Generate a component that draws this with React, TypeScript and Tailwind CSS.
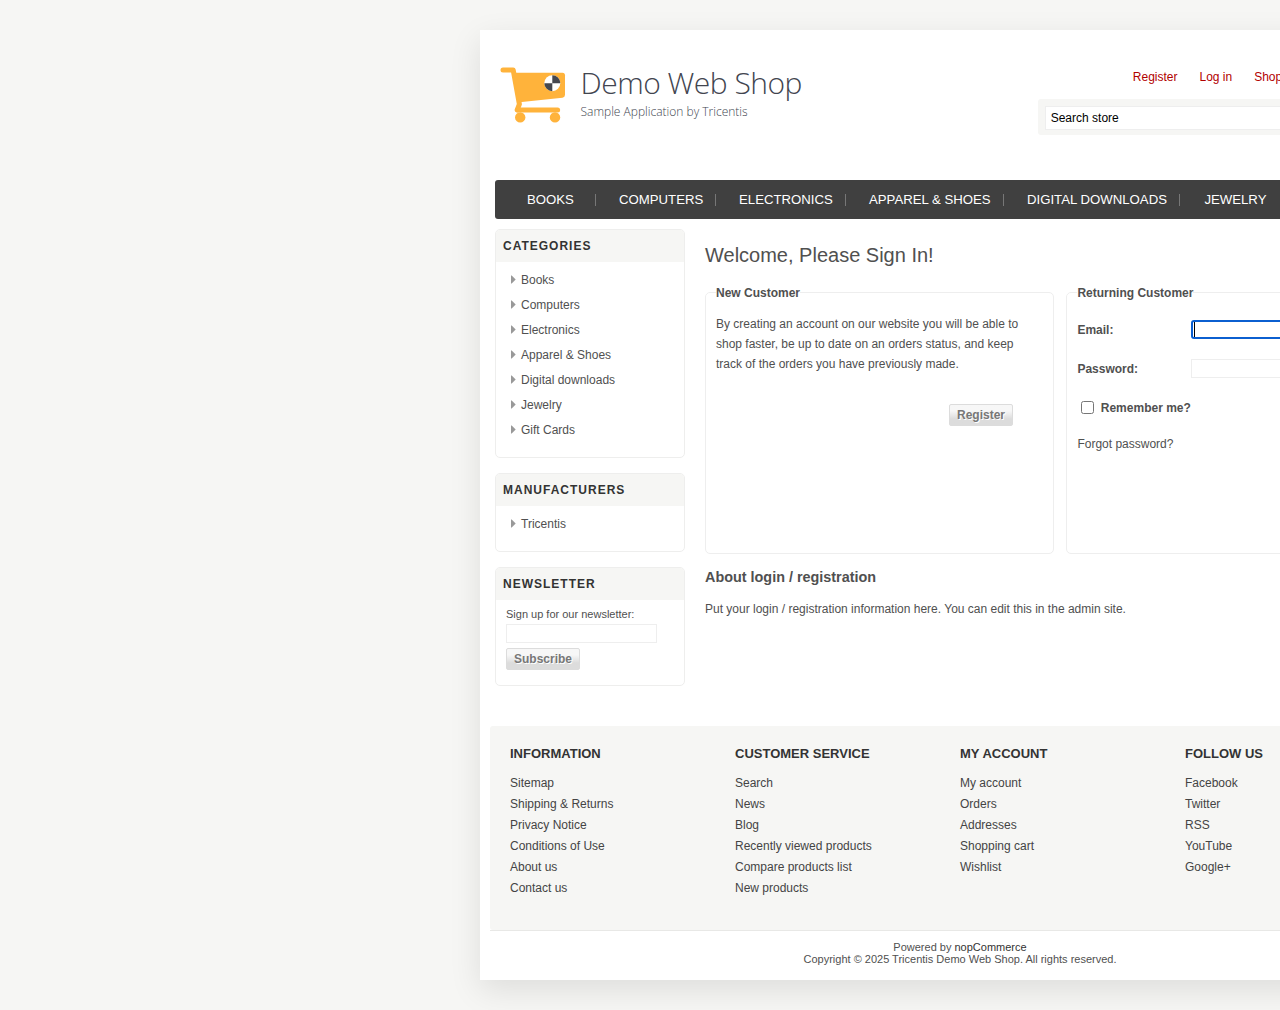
import type { ReactNode } from "react";

const navItems = [
  { label: "BOOKS", cls: "w-[101px] pl-8" },
  { label: "COMPUTERS", cls: "w-[120px] pl-[23px]" },
  { label: "ELECTRONICS", cls: "w-[130px] pl-[23px]" },
  { label: "APPAREL & SHOES", cls: "w-[158px] pl-[23px]" },
  { label: "DIGITAL DOWNLOADS", cls: "w-[176px] pl-[23px]" },
  { label: "JEWELRY", cls: "w-[110px] pl-[24.4px]" },
];

const footerColumns = [
  { title: "INFORMATION", links: ["Sitemap", "Shipping & Returns", "Privacy Notice", "Conditions of Use", "About us", "Contact us"] },
  { title: "CUSTOMER SERVICE", links: ["Search", "News", "Blog", "Recently viewed products", "Compare products list", "New products"] },
  { title: "MY ACCOUNT", links: ["My account", "Orders", "Addresses", "Shopping cart", "Wishlist"] },
  { title: "FOLLOW US", links: ["Facebook", "Twitter", "RSS", "YouTube", "Google+"] },
];

function CartLogo() {
  return (
    <svg width="66" height="58" viewBox="0 0 66 58" className="shrink-0" aria-hidden="true">
      <path
        d="M3 3H13.2L19.4 37.2L17.2 43"
        fill="none"
        stroke="#ffb33b"
        strokeWidth="5"
        strokeLinecap="round"
        strokeLinejoin="round"
      />
      <path d="M12.5 5.7H62.5Q65 5.7 65 8.2V27.8Q65 30.3 62.5 30.7L19.4 35.2Z" fill="#ffb33b" />
      <path d="M17.8 42.9H57.6" stroke="#ffb33b" strokeWidth="5" strokeLinecap="round" />
      <circle cx="20.2" cy="50.4" r="5.2" fill="#ffb33b" />
      <circle cx="55" cy="50.4" r="5.2" fill="#ffb33b" />
      <circle cx="52.3" cy="16.2" r="8" fill="#fff" />
      <path d="M52.3 16.2V8.2A8 8 0 0 1 60.3 16.2ZM52.3 16.2V24.2A8 8 0 0 1 44.3 16.2Z" fill="#45474f" />
    </svg>
  );
}

function Block({ title, className, children }: { title: string; className: string; children: ReactNode }) {
  return (
    <section className={"overflow-hidden rounded-[5px] border border-[#eeeeed] " + className}>
      <h3 className="h-8 bg-[#f6f6f4] pl-[7px] font-bold leading-[32px] tracking-[1px] text-[#333]">{title}</h3>
      {children}
    </section>
  );
}

function LinkList({ items }: { items: string[] }) {
  return (
    <ul className="pt-[5px] pl-[15px]">
      {items.map((item) => (
        <li key={item} className="flex h-[25px] items-center gap-[5px]">
          <svg width="5" height="9" viewBox="0 0 5 9" aria-hidden="true">
            <path d="M0 0.5H0.7L4.7 4.5L0.7 8.5H0Z" fill="#999" />
          </svg>
          <a>{item}</a>
        </li>
      ))}
    </ul>
  );
}

function GreyButton({ children, className }: { children: ReactNode; className: string }) {
  return (
    <button
      className={
        "block h-[22px] rounded-[2px] border border-[#dcdcdc] bg-linear-to-b from-[#f7f7f7] from-30% to-[#dcdcdc] to-70% text-center font-bold leading-5 text-[#777] [text-shadow:1px_1px_0_#fff] " +
        className
      }
    >
      {children}
    </button>
  );
}

export default function App() {
  return (
    <div className="h-[1010px] w-[1280px] overflow-hidden bg-[#f6f6f4] pt-[30px] pl-[480px] font-['Liberation_Sans',Arial,sans-serif] text-[12px] text-[#505050]">
      <div className="h-[950px] w-[960px] bg-white shadow-[0_10px_30px_rgba(0,0,0,0.1)]">
        <header className="flex h-[150px] pl-[20px]">
          <div className="flex w-[538px] pt-[37px]">
            <CartLogo />
            <div className="pl-[14.5px] font-['Open_Sans',sans-serif] font-light text-[#42454f]">
              <div className="mt-[-4px] h-[40px] whitespace-nowrap text-[30px] leading-[40px] tracking-[-0.5px]">Demo Web Shop</div>
              <div className="mt-[1px] whitespace-nowrap text-[12px] leading-[16px]">Sample Application by Tricentis</div>
            </div>
          </div>
          <div className="w-[387px] pt-[39px]">
            <nav className="flex gap-[22px] pl-[94.8px] leading-4 whitespace-nowrap text-[#b20000]">
              <a>Register</a>
              <a>Log in</a>
              <a>Shopping cart (0)</a>
            </nav>
            <div className="mt-[14px] h-9 rounded-[3px] bg-[#f6f6f4] p-[7px]">
              <div className="h-6 w-[280px] border border-[#eee] bg-white pl-[4.7px] leading-[23px] text-black">Search store</div>
            </div>
          </div>
        </header>

        <nav className="mx-[15px] flex h-[39px] items-center overflow-hidden rounded-[3px] bg-[#404040] text-[13.2px] text-white">
          {navItems.map((item) => (
            <a key={item.label} className={"h-3 shrink-0 border-r border-[#777] whitespace-nowrap leading-[12px] " + item.cls}>
              {item.label}
            </a>
          ))}
        </nav>

        <div className="flex h-[507px] gap-5 px-[15px] pt-[10px]">
          <aside className="flex w-[190px] shrink-0 flex-col gap-[15px]">
            <Block title="CATEGORIES" className="h-[229px]">
              <LinkList items={["Books", "Computers", "Electronics", "Apparel & Shoes", "Digital downloads", "Jewelry", "Gift Cards"]} />
            </Block>
            <Block title="MANUFACTURERS" className="h-[79px]">
              <LinkList items={["Tricentis"]} />
            </Block>
            <Block title="NEWSLETTER" className="h-[119px]">
              <div className="pt-[5px] pl-[10px]">
                <div className="h-[19px] text-[11px] leading-[18px]">Sign up for our newsletter:</div>
                <div className="h-[19px] w-[151px] border border-[#eee] bg-white" />
                <GreyButton className="mt-[5px] w-[74px]">Subscribe</GreyButton>
              </div>
            </Block>
          </aside>

          <main className="w-[710px]">
            <h1 className="pt-[11px] text-[20px] leading-[30px]">Welcome, Please Sign In!</h1>
            <div className="mt-[15px] flex gap-3">
              <fieldset className="h-[269px] w-[349px] rounded-[5px] border border-[#eee] px-[10px]">
                <legend className="h-[15px] font-bold leading-[16px]">New Customer</legend>
                <p className="w-[310px] pt-[14px] leading-5">
                  By creating an account on our website you will be able to shop faster, be up to date on an orders status, and keep track of the orders you have previously made.
                </p>
                <GreyButton className="mt-[30px] ml-[233px] w-[64px]">Register</GreyButton>
              </fieldset>
              <fieldset className="h-[269px] w-[349px] rounded-[5px] border border-[#eee] px-[10.4px]">
                <legend className="h-[15px] font-bold leading-[16px]">Returning Customer</legend>
                <div className="mt-[20px] flex h-[19px] items-center">
                  <label className="w-[113.6px] font-bold">Email:</label>
                  <div className="h-[19px] w-[194px] rounded-[3px] border-2 border-[#0b5fd0] bg-white pl-px">
                    <div className="h-[15px] w-px bg-black" />
                  </div>
                </div>
                <div className="mt-5 flex h-[19px] items-center">
                  <label className="w-[113.6px] font-bold">Password:</label>
                  <div className="h-[19px] w-[194px] border border-[#eee] bg-white" />
                </div>
                <div className="mt-5 flex h-[19px] items-center gap-[6.8px] pl-[3.6px]">
                  <span className="h-[13px] w-[13px] rounded-[2.5px] border border-[#767676] bg-white" />
                  <span className="font-bold">Remember me?</span>
                </div>
                <a className="mt-[18px] block leading-[18px]">Forgot password?</a>
              </fieldset>
            </div>
            <h2 className="pt-[13px] text-[14.4px] leading-5 font-bold">About login / registration</h2>
            <p className="mt-3 leading-5">Put your login / registration information here. You can edit this in the admin site.</p>
          </main>
        </div>

        <footer className="px-[10px]">
          <div className="border-b border-[#e8e8e6]">
            <div className="flex h-[204px] rounded-[3px] bg-[#f6f6f4] pl-5 pt-[19px]">
              {footerColumns.map((col) => (
                <div key={col.title} className="w-[225px] shrink-0">
                  <h3 className="text-[13px] leading-[18px] font-bold text-[#333]">{col.title}</h3>
                  <ul className="mt-[10px] text-[#444]">
                    {col.links.map((link) => (
                      <li key={link} className="leading-[21px]">
                        <a>{link}</a>
                      </li>
                    ))}
                  </ul>
                </div>
              ))}
            </div>
          </div>
          <div className="pt-[10px] text-center text-[11px] leading-[12px]">
            <div>
              Powered by <span className="text-[#333]">nopCommerce</span>
            </div>
            <div>Copyright © 2025 Tricentis Demo Web Shop. All rights reserved.</div>
          </div>
        </footer>
      </div>
    </div>
  );
}
